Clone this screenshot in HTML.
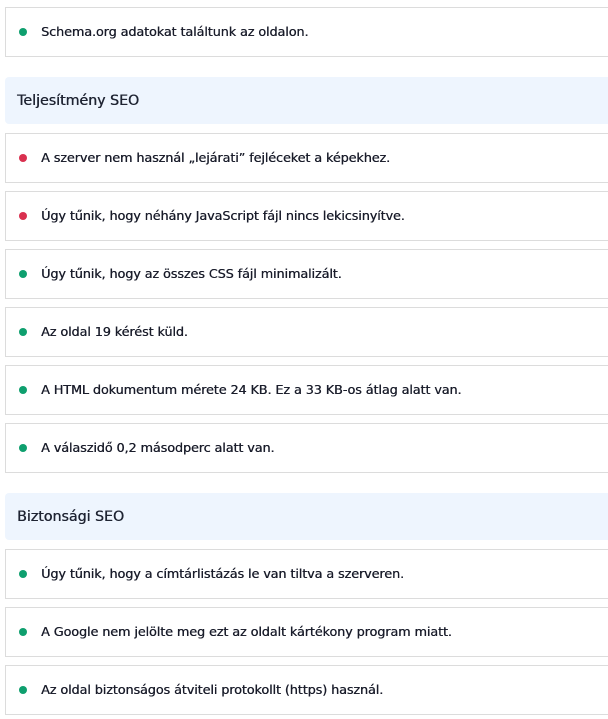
<!DOCTYPE html>
<html><head><meta charset="utf-8"><style>
body{margin:0;background:#fff;font-family:"DejaVu Sans","Liberation Sans",sans-serif;width:608px;height:719px;overflow:hidden;position:relative}
.i{position:absolute;left:5px;width:620px;height:48px;border:1px solid #dcdcdc;box-sizing:content-box;font-size:12.8px;color:#1a1d2b;line-height:48px;text-shadow:0.35px 0 0 #1a1d2b}
.i span.d{position:absolute;left:13px;top:20px;width:8px;height:8px;border-radius:50%;background:#0e9f6e}
.i span.r{background:#d9304f}
.i .t{position:absolute;left:35px;top:1px;letter-spacing:-0.1px}
.h{position:absolute;left:5px;width:620px;height:47px;background:#eef5fe;border-radius:4px;font-size:14.2px;color:#1f2433;line-height:49px;padding-left:12px;box-sizing:border-box;text-shadow:0.4px 0 0 #1f2433}
</style></head><body>
<div class="i" style="top:7px"><span class="d"></span><span class="t">Schema.org adatokat találtunk az oldalon.</span></div>
<div class="h" style="top:77px">Teljesítmény SEO</div>
<div class="i" style="top:133px"><span class="d r"></span><span class="t">A szerver nem használ „lejárati” fejléceket a képekhez.</span></div>
<div class="i" style="top:191px"><span class="d r"></span><span class="t">Úgy tűnik, hogy néhány JavaScript fájl nincs lekicsinyítve.</span></div>
<div class="i" style="top:249px"><span class="d"></span><span class="t">Úgy tűnik, hogy az összes CSS fájl minimalizált.</span></div>
<div class="i" style="top:307px"><span class="d"></span><span class="t">Az oldal 19 kérést küld.</span></div>
<div class="i" style="top:365px"><span class="d"></span><span class="t">A HTML dokumentum mérete 24 KB. Ez a 33 KB-os átlag alatt van.</span></div>
<div class="i" style="top:423px"><span class="d"></span><span class="t">A válaszidő 0,2 másodperc alatt van.</span></div>
<div class="h" style="top:493px">Biztonsági SEO</div>
<div class="i" style="top:549px"><span class="d"></span><span class="t">Úgy tűnik, hogy a címtárlistázás le van tiltva a szerveren.</span></div>
<div class="i" style="top:607px"><span class="d"></span><span class="t">A Google nem jelölte meg ezt az oldalt kártékony program miatt.</span></div>
<div class="i" style="top:665px"><span class="d"></span><span class="t">Az oldal biztonságos átviteli protokollt (https) használ.</span></div>
</body></html>
